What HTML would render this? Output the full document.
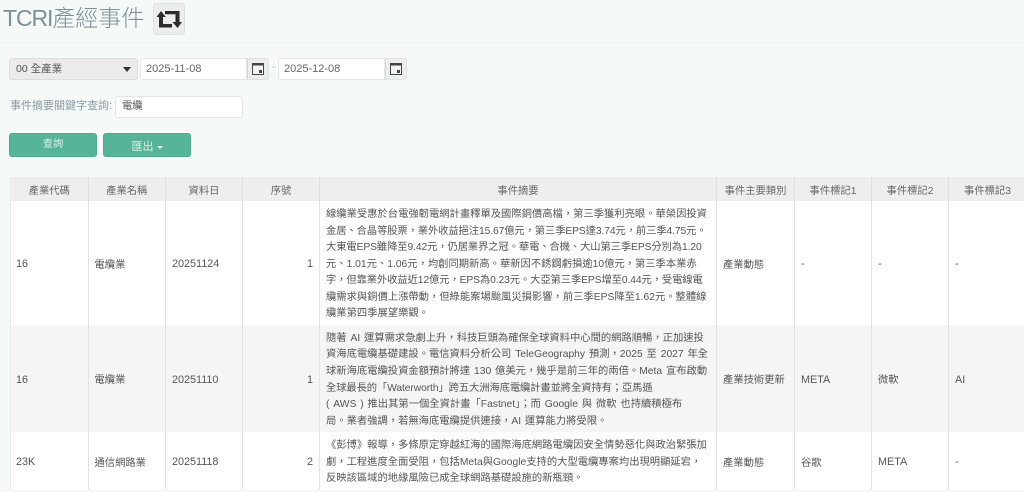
<!DOCTYPE html>
<html lang="zh-Hant">
<head>
<meta charset="utf-8">
<title>TCRI產經事件</title>
<style>
html,body{margin:0;padding:0;background:#f5f9f7}
body{width:1024px;height:492px;overflow:hidden;position:relative;font-family:"Liberation Sans","Noto Sans CJK TC",sans-serif;color:#555;font-size:10.3px;filter:blur(.3px)}
.a{position:absolute;box-sizing:border-box;white-space:nowrap}
h1{margin:0;font-weight:300;font-size:23px;line-height:30px;color:#7f8e9b;left:3px;top:3px}
h1 span{letter-spacing:-1.1px}
.ibtn{left:153px;top:3px;width:32px;height:32px;background:#eceeee;border:1px solid #dfe1e1;border-radius:3px}
.hr{left:0;top:42px;width:1024px;height:1px;background:#eef2f0}
.sel{left:9px;top:58px;width:129px;height:22px;background:#ebebeb;border:1px solid #ddd;border-radius:3px;padding:0 6px;line-height:20px;color:#555;font-size:10.5px}
.sel i{position:absolute;right:6px;top:8px;border:4px solid transparent;border-top:5px solid #333;border-bottom:0}
.inp{height:22px;top:58px;background:#fff;border:1px solid #e3e6e5;border-radius:3px 0 0 3px;padding:0 5px;line-height:20px;font-size:11px;color:#666}
.cal{top:58px;width:22px;height:22px;background:#eceeee;border:1px solid #e0e2e2;border-left:1px solid #d5d7d7;border-radius:0 3px 3px 0}
.btn{top:133px;width:88px;height:24px;background:#56b498;border:1px solid #4eab90;border-radius:3px;color:#dcefe9;text-align:center;line-height:22px}
.wrap{left:10px;top:177px;width:1014px;height:313px;overflow:hidden}
table{border-collapse:collapse;table-layout:fixed;width:1016px;background:#fff}
th,td{border:1px solid #e2e2e2;border-top:0;border-bottom:0;padding:0 6px;font-weight:400;text-align:left;font-size:10.3px;color:#555}
th{height:24px;background:#eeeeee;text-align:center;color:#666;padding:0}
tr.s td{background:#f5f5f5}
td{vertical-align:middle}
td.n{font-size:10.8px;padding-top:2px}
td.f{padding-left:5px}
td.r{text-align:right}
td.x{font-size:10.3px;line-height:16.6px;white-space:nowrap;padding-top:4px}
tr.s td.x{word-spacing:1px}
.t1{letter-spacing:-.1px}
th:first-child,td:first-child{border-left:1px solid #e8e8e8}
</style>
</head>
<body>
<h1 class="a"><span>TCRI</span>產經事件</h1>
<div class="a ibtn">
<svg width="30" height="30" viewBox="154 4 30 30" style="display:block"><path fill="#2b2b2b" d="M161 11 165.800 17H163V24H172V27.500H159V17H156.500ZM165 11H179.500V22H182L177.500 28 172.500 22H175.500V14.300H165Z"/></svg>
</div>
<div class="a hr"></div>

<div class="a sel">00 全產業<i></i></div>
<div class="a inp" style="left:140px;width:107px">2025-11-08</div>
<div class="a cal" style="left:247px"><svg width="20" height="20" viewBox="0 0 20 20" style="display:block"><rect x="4.500" y="4.500" width="11" height="11" fill="#f4f4f4" stroke="#444" stroke-width="1"/><rect x="4" y="4" width="12" height="2.500" fill="#444"/><rect x="11" y="11" width="3" height="3" fill="#444"/></svg></div>
<div class="a" style="left:272px;top:62px;color:#aaa">-</div>
<div class="a inp" style="left:278px;width:107px">2025-12-08</div>
<div class="a cal" style="left:385px"><svg width="20" height="20" viewBox="0 0 20 20" style="display:block"><rect x="4.500" y="4.500" width="11" height="11" fill="#f4f4f4" stroke="#444" stroke-width="1"/><rect x="4" y="4" width="12" height="2.500" fill="#444"/><rect x="11" y="11" width="3" height="3" fill="#444"/></svg></div>

<div class="a" style="left:10px;top:98px;line-height:16px;color:#8d9aa6;font-size:11px">事件摘要關鍵字查詢:</div>
<div class="a" style="left:115px;top:96px;width:128px;height:22px;background:#fff;border:1px solid #e3e6e5;border-radius:3px;padding:0 6px;line-height:20px;color:#555">電纜</div>

<div class="a btn" style="left:9px">查詢</div>
<div class="a btn" style="left:103px;line-height:27px;font-size:11px">匯出 <span style="display:inline-block;vertical-align:middle;border:3px solid transparent;border-top:3px solid #f2faf7;border-bottom:0"></span></div>

<div class="a wrap">
<table>
<colgroup><col style="width:77.500px"><col style="width:77.500px"><col style="width:77px"><col style="width:77px"><col style="width:397px"><col style="width:78px"><col style="width:77px"><col style="width:77px"><col style="width:78px"></colgroup>
<tr><th>產業代碼</th><th>產業名稱</th><th>資料日</th><th>序號</th><th>事件摘要</th><th>事件主要類別</th><th>事件標記1</th><th>事件標記2</th><th>事件標記3</th></tr>
<tr style="height:124px"><td class="n f">16</td><td>電纜業</td><td class="n">20251124</td><td class="r n">1</td><td class="x">線纜業受惠於台電強韌電網計畫釋單及國際銅價高檔，第三季獲利亮眼。華榮因投資<br><span class="t1">金居、合晶等股票，業外收益挹注15.67億元，第三季EPS達3.74元，前三季4.75元。</span><br><span class="t1">大東電EPS雖降至9.42元，仍居業界之冠。華電、合機、大山第三季EPS分別為1.20</span><br>元、1.01元、1.06元，均創同期新高。華新因不銹鋼虧損逾10億元，第三季本業赤<br><span class="t1">字，但靠業外收益近12億元，EPS為0.23元。大亞第三季EPS增至0.44元，受電線電</span><br>纜需求與銅價上漲帶動，但綠能案場颱風災損影響，前三季EPS降至1.62元。整體線<br>纜業第四季展望樂觀。</td><td>產業動態</td><td class="n">-</td><td class="n">-</td><td class="n">-</td></tr>
<tr class="s" style="height:107px"><td class="n f">16</td><td>電纜業</td><td class="n">20251110</td><td class="r n">1</td><td class="x">隨著 AI 運算需求急劇上升，科技巨頭為確保全球資料中心間的網路順暢，正加速投<br>資海底電纜基礎建設。電信資料分析公司 TeleGeography 預測，2025 至 2027 年全<br>球新海底電纜投資金額預計將達 130 億美元，幾乎是前三年的兩倍。Meta 宣布啟動<br><span class="t1">全球最長的「Waterworth」跨五大洲海底電纜計畫並將全資持有；亞馬遜</span><br>( AWS ) 推出其第一個全資計畫「Fastnet」；而 Google 與 微軟 也持續積極布<br>局。業者強調，若無海底電纜提供連接，AI 運算能力將受限。</td><td>產業技術更新</td><td class="n">META</td><td>微軟</td><td class="n">AI</td></tr>
<tr style="height:58px"><td class="n f">23K</td><td>通信網路業</td><td class="n">20251118</td><td class="r n">2</td><td class="x">《彭博》報導，多條原定穿越紅海的國際海底網路電纜因安全情勢惡化與政治緊張加<br>劇，工程進度全面受阻，包括Meta與Google支持的大型電纜專案均出現明顯延宕，<br>反映該區域的地緣風險已成全球網路基礎設施的新瓶頸。</td><td>產業動態</td><td>谷歌</td><td class="n">META</td><td class="n">-</td></tr>
</table>
</div>
</body>
</html>
